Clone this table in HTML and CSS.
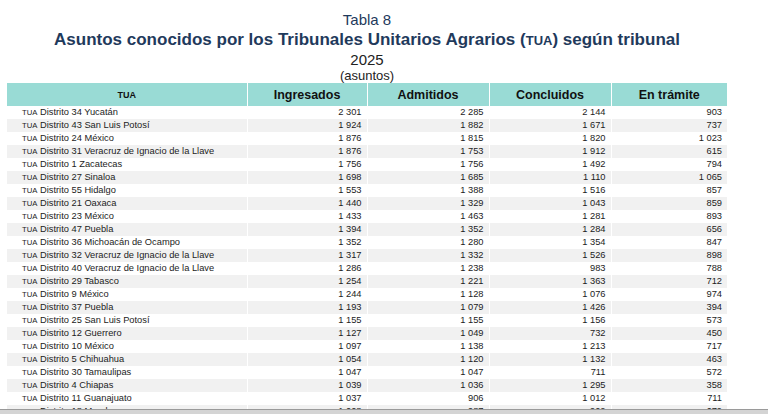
FILE: index.html
```html
<!DOCTYPE html>
<html lang="es">
<head>
<meta charset="utf-8">
<title>Tabla 8</title>
<link rel="stylesheet" href="styles.css">
</head>
<body>
<div class="page">
  <div class="content">
    <header class="titles">
      <div class="t-num">Tabla 8</div>
      <div class="t-main">Asuntos conocidos por los Tribunales Unitarios Agrarios (<span class="sc-title">TUA</span>) según tribunal</div>
      <div class="t-year">2025</div>
      <div class="t-unit">(asuntos)</div>
    </header>
    <table class="data">
      <colgroup>
        <col class="c1"><col class="c2"><col class="c3"><col class="c4"><col class="c5">
      </colgroup>
      <thead>
        <tr>
          <th class="h-tua">TUA</th>
          <th>Ingresados</th>
          <th>Admitidos</th>
          <th>Concluidos</th>
          <th>En trámite</th>
        </tr>
      </thead>
      <tbody>
        <tr><td class="name"><span class="sc">TUA</span> Distrito 34 Yucatán</td><td>2 301</td><td>2 285</td><td>2 144</td><td>903</td></tr>
        <tr><td class="name"><span class="sc">TUA</span> Distrito 43 San Luis Potosí</td><td>1 924</td><td>1 882</td><td>1 671</td><td>737</td></tr>
        <tr><td class="name"><span class="sc">TUA</span> Distrito 24 México</td><td>1 876</td><td>1 815</td><td>1 820</td><td>1 023</td></tr>
        <tr><td class="name"><span class="sc">TUA</span> Distrito 31 Veracruz de Ignacio de la Llave</td><td>1 876</td><td>1 753</td><td>1 912</td><td>615</td></tr>
        <tr><td class="name"><span class="sc">TUA</span> Distrito 1 Zacatecas</td><td>1 756</td><td>1 756</td><td>1 492</td><td>794</td></tr>
        <tr><td class="name"><span class="sc">TUA</span> Distrito 27 Sinaloa</td><td>1 698</td><td>1 685</td><td>1 110</td><td>1 065</td></tr>
        <tr><td class="name"><span class="sc">TUA</span> Distrito 55 Hidalgo</td><td>1 553</td><td>1 388</td><td>1 516</td><td>857</td></tr>
        <tr><td class="name"><span class="sc">TUA</span> Distrito 21 Oaxaca</td><td>1 440</td><td>1 329</td><td>1 043</td><td>859</td></tr>
        <tr><td class="name"><span class="sc">TUA</span> Distrito 23 México</td><td>1 433</td><td>1 463</td><td>1 281</td><td>893</td></tr>
        <tr><td class="name"><span class="sc">TUA</span> Distrito 47 Puebla</td><td>1 394</td><td>1 352</td><td>1 284</td><td>656</td></tr>
        <tr><td class="name"><span class="sc">TUA</span> Distrito 36 Michoacán de Ocampo</td><td>1 352</td><td>1 280</td><td>1 354</td><td>847</td></tr>
        <tr><td class="name"><span class="sc">TUA</span> Distrito 32 Veracruz de Ignacio de la Llave</td><td>1 317</td><td>1 332</td><td>1 526</td><td>898</td></tr>
        <tr><td class="name"><span class="sc">TUA</span> Distrito 40 Veracruz de Ignacio de la Llave</td><td>1 286</td><td>1 238</td><td>983</td><td>788</td></tr>
        <tr><td class="name"><span class="sc">TUA</span> Distrito 29 Tabasco</td><td>1 254</td><td>1 221</td><td>1 363</td><td>712</td></tr>
        <tr><td class="name"><span class="sc">TUA</span> Distrito 9 México</td><td>1 244</td><td>1 128</td><td>1 076</td><td>974</td></tr>
        <tr><td class="name"><span class="sc">TUA</span> Distrito 37 Puebla</td><td>1 193</td><td>1 079</td><td>1 426</td><td>394</td></tr>
        <tr><td class="name"><span class="sc">TUA</span> Distrito 25 San Luis Potosí</td><td>1 155</td><td>1 155</td><td>1 156</td><td>573</td></tr>
        <tr><td class="name"><span class="sc">TUA</span> Distrito 12 Guerrero</td><td>1 127</td><td>1 049</td><td>732</td><td>450</td></tr>
        <tr><td class="name"><span class="sc">TUA</span> Distrito 10 México</td><td>1 097</td><td>1 138</td><td>1 213</td><td>717</td></tr>
        <tr><td class="name"><span class="sc">TUA</span> Distrito 5 Chihuahua</td><td>1 054</td><td>1 120</td><td>1 132</td><td>463</td></tr>
        <tr><td class="name"><span class="sc">TUA</span> Distrito 30 Tamaulipas</td><td>1 047</td><td>1 047</td><td>711</td><td>572</td></tr>
        <tr><td class="name"><span class="sc">TUA</span> Distrito 4 Chiapas</td><td>1 039</td><td>1 036</td><td>1 295</td><td>358</td></tr>
        <tr><td class="name"><span class="sc">TUA</span> Distrito 11 Guanajuato</td><td>1 037</td><td>906</td><td>1 012</td><td>711</td></tr>
        <tr><td class="name"><span class="sc">TUA</span> Distrito 18 Morelos</td><td>1 008</td><td>987</td><td>902</td><td>679</td></tr>
      </tbody>
    </table>
  </div>
  <div class="viewer-bar"></div>
</div>
</body>
</html>
```

FILE: styles.css
```css
* { box-sizing: border-box; }
html, body { margin: 0; padding: 0; background: #ffffff; }
body { font-family: "Liberation Sans", Arial, sans-serif; color: #222; }

.page {
  width: 768px;
  height: 414px;
  display: flex;
  flex-direction: column;
  overflow: hidden;
}
.content {
  flex: 1;
  overflow: hidden;
  padding: 11px 0 0 7px;
}

.titles {
  width: 720px;
  text-align: center;
}
.t-num {
  color: #1f3a5c;
  font-size: 15px;
  line-height: 18px;
}
.t-main {
  color: #1f3a5c;
  font-size: 17px;
  font-weight: bold;
  line-height: 21px;
}
.sc-title { font-size: 13px; }
.t-year {
  color: #222;
  font-size: 15px;
  line-height: 17px;
}
.t-unit {
  color: #222;
  font-size: 13px;
  line-height: 15px;
}

.data {
  width: 720px;
  table-layout: fixed;
  border-collapse: collapse;
}
.c1 { width: 240px; }
.c2 { width: 120px; }
.c3 { width: 122px; }
.c4 { width: 122px; }
.c5 { width: 116px; }

.data th {
  background: #99dbd5;
  height: 23px;
  padding: 0;
  font-size: 12.5px;
  font-weight: bold;
  color: #111;
  border-left: 1px solid #ffffff;
  text-align: center;
}
.data th:first-child { border-left: none; }
.data th.h-tua { font-size: 9px; }

.data td {
  height: 13px;
  padding: 0 5px 0 0;
  font-size: 9.3px;
  line-height: 13px;
  color: #1c1c1c;
  text-align: right;
  white-space: nowrap;
  border-left: 1px solid #ffffff;
}
.data td:first-child { border-left: none; }
.data td.name {
  text-align: left;
  padding-left: 15px;
}
.data tbody tr:nth-child(even) td { background: #f1f1f1; }
.sc { font-size: 7.7px; }

.viewer-bar {
  height: 5px;
  flex: none;
  background: #d4d4d4;
  border-top: 1px solid #9a9a9a;
}
```
